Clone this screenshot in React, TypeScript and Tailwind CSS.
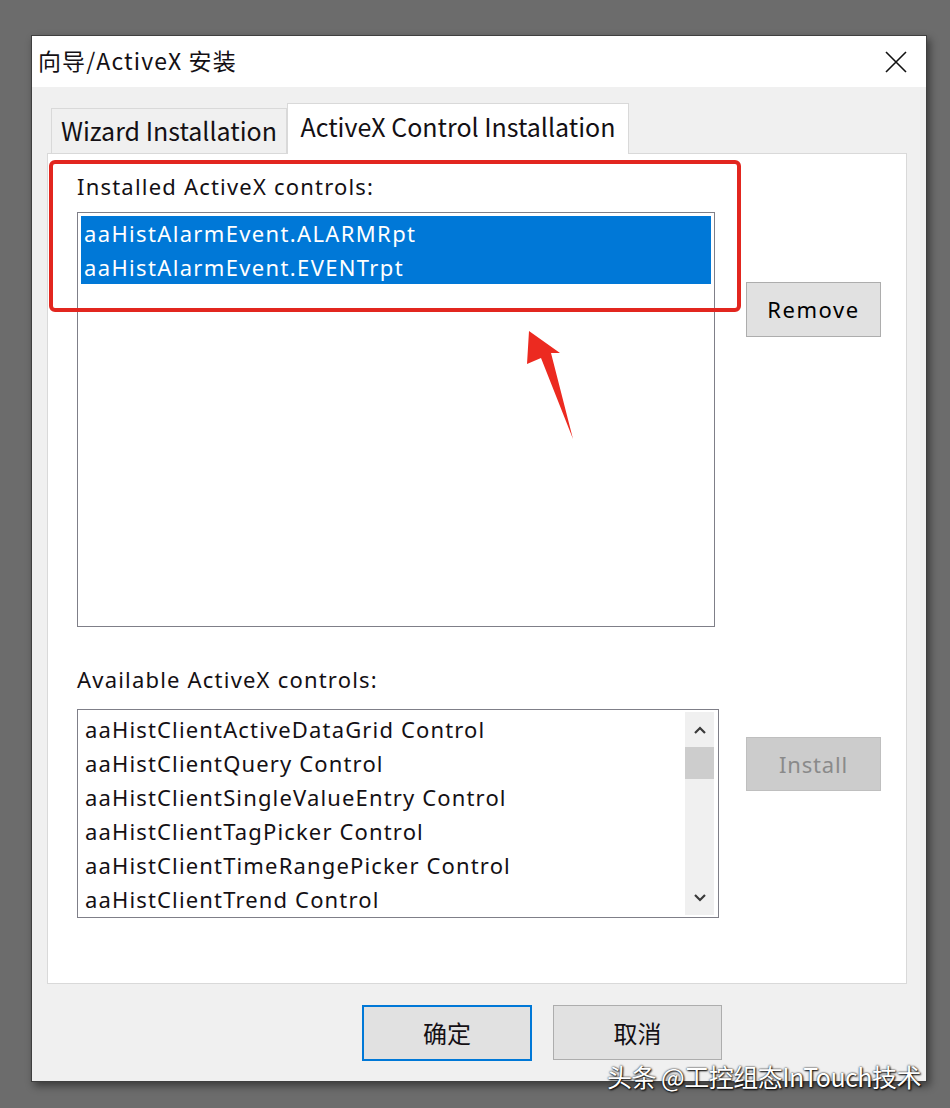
const installed = ["aaHistAlarmEvent.ALARMRpt", "aaHistAlarmEvent.EVENTrpt"]

const available = [
  "aaHistClientActiveDataGrid Control",
  "aaHistClientQuery Control",
  "aaHistClientSingleValueEntry Control",
  "aaHistClientTagPicker Control",
  "aaHistClientTimeRangePicker Control",
  "aaHistClientTrend Control",
]

function Chevron({ up }: { up?: boolean }) {
  return (
    <svg width="14" height="10" viewBox="0 0 14 10">
      <path
        d={up ? "M2 8 L7 3 L12 8" : "M2 2 L7 7 L12 2"}
        fill="none"
        stroke="#3a3a3a"
        strokeWidth="2.2"
      />
    </svg>
  )
}

export default function App() {
  return (
    <div className="relative w-[950px] h-[1108px] bg-[#6c6c6c] pt-[35px] pl-[31px] font-['Noto_Sans','Noto_Sans_CJK_SC',sans-serif] text-[#141014]">
      <div className="w-[896px] h-[1047px] flex flex-col bg-[#f0f0f0] border border-[#3f3f3f] shadow-[3px_4px_8px_rgba(0,0,0,0.45)]">
        {/* title bar */}
        <div className="h-[51px] bg-white flex items-center justify-between pl-[6px] pr-[19px]">
          <span className="text-[23px] font-['Noto_Sans_CJK_SC',sans-serif] tracking-[1.1px] -mt-[3px]">向导/ActiveX 安装</span>
          <svg width="22" height="22" viewBox="0 0 22 22">
            <path d="M1 1 L21 21 M21 1 L1 21" stroke="#111" strokeWidth="1.6" fill="none" />
          </svg>
        </div>

        <div className="flex-1 flex flex-col pl-[15px] pr-[19px] pt-[16px]">
          {/* tabs */}
          <div className="flex items-end pl-[4px] h-[50px] relative z-10">
            <div className="w-[236px] h-[45px] border border-b-0 border-[#d9d9d9] bg-[#f0f0f0] flex items-center justify-center text-[25px] font-['Noto_Sans_CJK_SC',sans-serif]">
              Wizard Installation
            </div>
            <div className="w-[342px] h-[51px] -mb-px border border-b-0 border-[#d9d9d9] bg-white flex items-center justify-center pb-[4px] text-[25px] font-['Noto_Sans_CJK_SC',sans-serif]">
              ActiveX Control Installation
            </div>
          </div>

          {/* panel */}
          <div className="relative h-[831px] bg-white border border-[#d9d9d9] pl-[29px] pt-[18px]">
            <div className="text-[22px] leading-[28px] tracking-[1.2px]">Installed ActiveX controls:</div>
            <div className="flex mt-[12px]">
              <div className="w-[638px] h-[415px] border border-[#7f7f88] p-[3px]">
                {installed.map((item) => (
                  <div key={item} className="h-[34px] bg-[#0078d7] text-white text-[22px] leading-[34px] pl-[3px] tracking-[1.35px]">
                    {item}
                  </div>
                ))}
              </div>
              <div className="ml-[31px] mt-[70px]">
                <div className="w-[135px] h-[55px] bg-[#e1e1e1] border border-[#adadad] flex items-center justify-center text-[22px] tracking-[1.6px] text-black">
                  Remove
                </div>
              </div>
            </div>

            <div className="mt-[38px] text-[22px] leading-[28px] tracking-[1.2px]">Available ActiveX controls:</div>
            <div className="flex mt-[16px]">
              <div className="w-[642px] h-[209px] border border-[#7f7f88] flex py-[2px] pr-[4px]">
                <div className="flex-1 pl-[7px]">
                  {available.map((item) => (
                    <div key={item} className="h-[34px] text-[22px] leading-[34px] whitespace-nowrap tracking-[1.15px]">
                      {item}
                    </div>
                  ))}
                </div>
                <div className="w-[29px] bg-[#f0f0f0] flex flex-col items-center">
                  <div className="h-[35px] flex items-center justify-center">
                    <Chevron up />
                  </div>
                  <div className="w-full h-[32px] bg-[#cdcdcd]" />
                  <div className="flex-1" />
                  <div className="h-[34px] flex items-center justify-center">
                    <Chevron />
                  </div>
                </div>
              </div>
              <div className="ml-[27px] mt-[28px]">
                <div className="w-[135px] h-[54px] bg-[#cccccc] border border-[#bfbfbf] flex items-center justify-center text-[22px] tracking-[0.8px] text-[#8a8a8a]">
                  Install
                </div>
              </div>
            </div>

            {/* annotation */}
            <div className="absolute left-[1px] top-[6px] w-[692px] h-[152px] border-[4px] border-[#e2261f] rounded-[6px]" />
            <svg className="absolute left-[472px] top-[171px]" width="60" height="120" viewBox="0 0 60 120">
              <polygon points="9,6 40,28 31,28 53,114 21,33 7,39" fill="#ec2a20" />
            </svg>
          </div>

          {/* footer buttons */}
          <div className="flex mt-[21px] ml-[315px] gap-[21px] font-['Noto_Sans_CJK_SC',sans-serif]">
            <div className="w-[170px] h-[56px] bg-[#e1e1e1] border-2 border-[#0078d7] flex items-center justify-center text-[24px]">
              确定
            </div>
            <div className="w-[169px] h-[55px] bg-[#e1e1e1] border border-[#adadad] flex items-center justify-center text-[24px]">
              取消
            </div>
          </div>
        </div>
      </div>

      <div className="absolute left-[607px] top-[1058px] text-white text-[25px] tracking-[-0.5px] font-['Noto_Sans_CJK_SC',sans-serif] [text-shadow:0_0_2px_#000,1px_1px_2px_#000]">
        头条 @工控组态InTouch技术
      </div>
    </div>
  )
}
